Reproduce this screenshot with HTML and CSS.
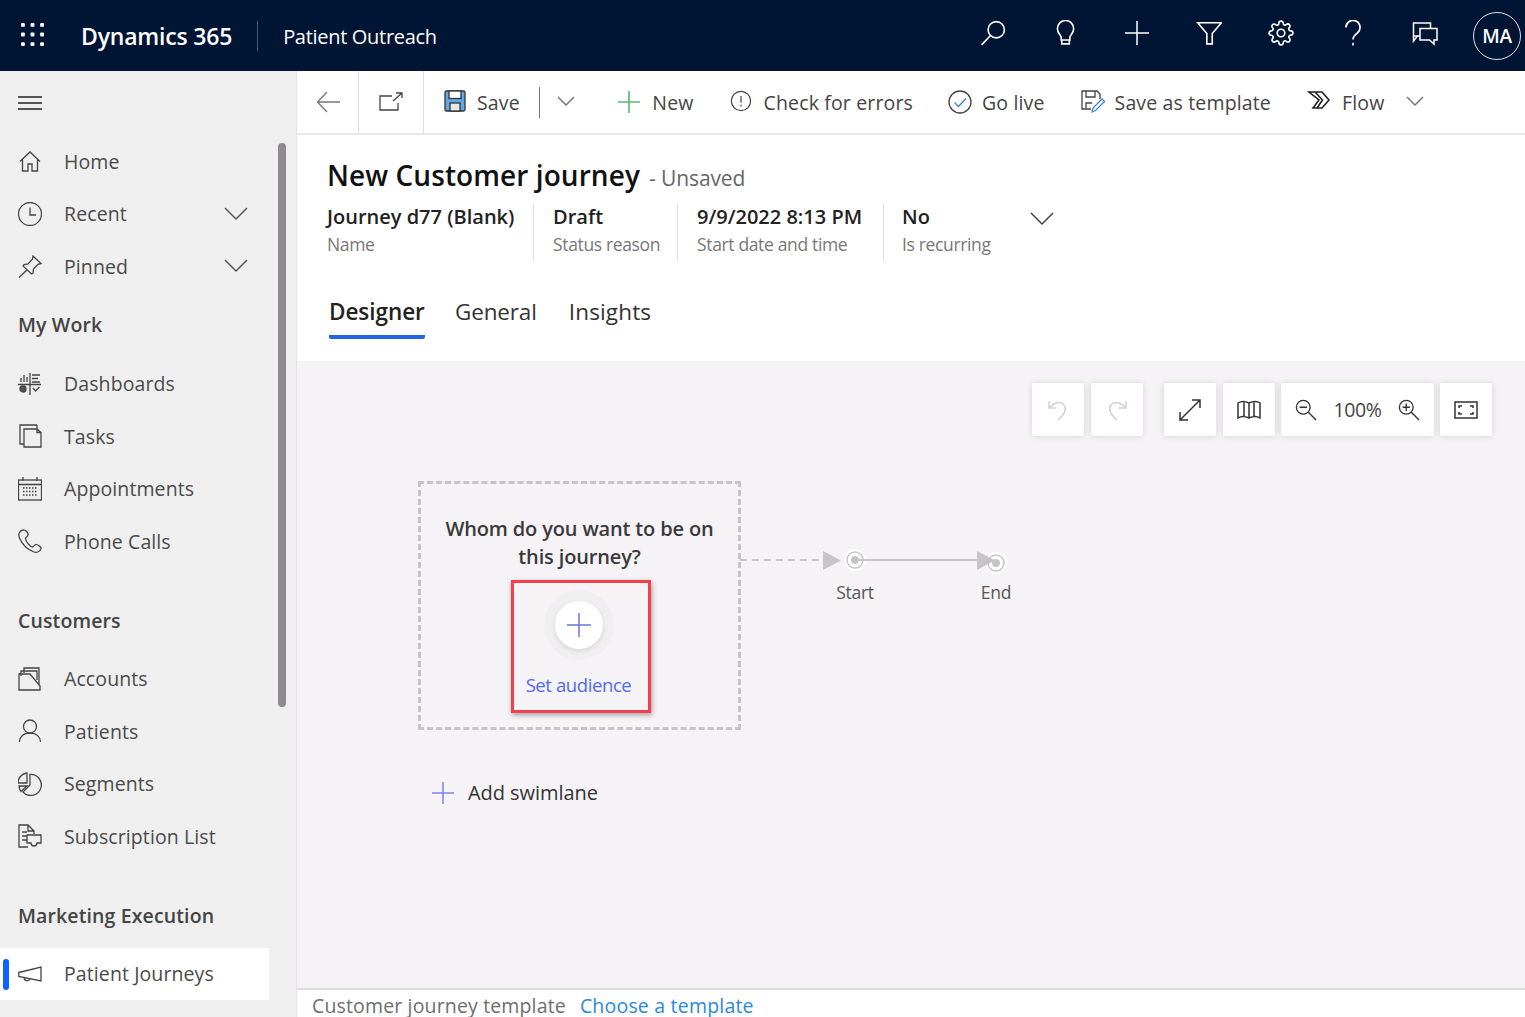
FILE: index.html
```html
<!DOCTYPE html>
<html lang="en">
<head>
<meta charset="utf-8">
<title>New Customer journey</title>
<link rel="stylesheet" href="styles.css">
</head>
<body>
<header class="topbar">
  <svg class="waffle" viewBox="0 0 24 24"><g fill="#fff"><rect x="0" y="0" width="4" height="4" rx="1"/><rect x="10" y="0" width="4" height="4" rx="1"/><rect x="20" y="0" width="4" height="4" rx="1"/><rect x="0" y="10" width="4" height="4" rx="1"/><rect x="10" y="10" width="4" height="4" rx="1"/><rect x="20" y="10" width="4" height="4" rx="1"/><rect x="0" y="20" width="4" height="4" rx="1"/><rect x="10" y="20" width="4" height="4" rx="1"/><rect x="20" y="20" width="4" height="4" rx="1"/></g></svg>
  <span class="brand">Dynamics 365</span>
  <span class="brand-div"></span>
  <span class="app">Patient Outreach</span>
  <div class="top-icons">
    <svg class="ti" viewBox="0 0 24 24"><circle cx="15" cy="9" r="7.500"/><path d="M9.500 14.500 1.500 23"/></svg>
    <svg class="ti" viewBox="0 0 24 24"><path d="M8.500 18.500v-2.500c0-2-3.500-3.500-3.500-8a7.500 7.500 0 0 1 15 0c0 4.500-3.500 6-3.500 8v2.500z"/><path d="M9 18.500v3.500h7v-3.500"/></svg>
    <svg class="ti ti-plus" viewBox="0 0 26 26"><path d="M13 1v24M1 13h24"/></svg>
    <svg class="ti" viewBox="0 0 24 24"><path d="M1.500 2.500h22l-8.500 10V22h-5v-9.500z"/></svg>
    <svg class="ti" viewBox="0 0 24 24"><path d="M19.400 15a1.650 1.650 0 0 0 .33 1.820l.06.06a2 2 0 0 1 0 2.830 2 2 0 0 1-2.830 0l-.06-.06a1.650 1.650 0 0 0-1.820-.33 1.650 1.650 0 0 0-1 1.510V21a2 2 0 0 1-2 2 2 2 0 0 1-2-2v-.09A1.650 1.650 0 0 0 9 19.400a1.650 1.650 0 0 0-1.820.33l-.06.06a2 2 0 0 1-2.830 0 2 2 0 0 1 0-2.830l.06-.06a1.650 1.650 0 0 0 .33-1.820 1.650 1.650 0 0 0-1.510-1H3a2 2 0 0 1-2-2 2 2 0 0 1 2-2h.09A1.650 1.650 0 0 0 4.600 9a1.650 1.650 0 0 0-.33-1.820l-.06-.06a2 2 0 0 1 0-2.830 2 2 0 0 1 2.830 0l.06.06a1.650 1.650 0 0 0 1.820.33H9a1.650 1.650 0 0 0 1-1.510V3a2 2 0 0 1 2-2 2 2 0 0 1 2 2v.09a1.650 1.650 0 0 0 1 1.510 1.650 1.650 0 0 0 1.820-.33l.06-.06a2 2 0 0 1 2.830 0 2 2 0 0 1 0 2.830l-.06.06a1.650 1.650 0 0 0-.33 1.820V9a1.650 1.650 0 0 0 1.510 1H21a2 2 0 0 1 2 2 2 2 0 0 1-2 2h-.09a1.650 1.650 0 0 0-1.510 1z"/><circle cx="12" cy="12" r="3.500"/></svg>
    <svg class="ti" viewBox="0 0 24 24"><path d="M5.500 7a6.500 6.500 0 1 1 10.500 5c-2.500 2-4 3-4 6"/><path d="M12 21v2.500"/></svg>
    <svg class="ti" viewBox="0 0 26 24"><path d="M8 15H1.500V2h17v5"/><path d="M1.500 15v5l4-5"/><path d="M8 7.500h17V19h-3v4l-4.500-4H8z"/></svg>
    <span class="avatar">MA</span>
  </div>
</header>

<div class="shell">
  <aside class="sidebar">
    <nav class="nav">
      <div class="burger"><svg class="nav-ico" viewBox="0 0 24 24"><path d="M0 6h24M0 12h24M0 18h24"/></svg></div>
      <a class="row"><svg class="nav-ico" viewBox="0 0 24 24"><path d="M2 12.500 12 3l10 9.500M4.500 10.500V22h5.500v-7h4v7h5.500V10.500"/></svg><span>Home</span></a>
      <a class="row"><svg class="nav-ico" viewBox="0 0 24 24"><circle cx="12" cy="12" r="11.500"/><path d="M12 5.500V13h6"/></svg><span>Recent</span><svg class="chev" viewBox="0 0 24 14"><path d="M1 1l11 11L23 1"/></svg></a>
      <a class="row"><svg class="nav-ico" viewBox="0 0 24 24"><path d="M15 2l8 7.500-3 .8-4.500 4.700-.5 4-1.500 1L5 12l1-1.500 4-.5 4.500-4.700zM9.500 15.500 1 23.500"/></svg><span>Pinned</span><svg class="chev" viewBox="0 0 24 14"><path d="M1 1l11 11L23 1"/></svg></a>

      <h2 class="sec sec-a">My Work</h2>
      <a class="row"><svg class="nav-ico" viewBox="0 0 24 24"><path d="M0 12.500h23M12 1v22M3 10V6M6 10V3M9 10V5M14 3h8M14 6.500h6M14 10h8M15 16l2.500 3 4-4"/><circle cx="5" cy="17" r="3" fill="#555"/></svg><span>Dashboards</span></a>
      <a class="row"><svg class="nav-ico" viewBox="0 0 24 24"><path d="M19 1H2v19h4M6 5v18h17V8.500L19 5H6zM19 1v7.500h4"/></svg><span>Tasks</span></a>
      <a class="row"><svg class="nav-ico" viewBox="0 0 24 24"><rect x="0.500" y="3" width="23" height="20"/><path d="M0 7.500h24M5 0v4M19 0v4"/><path class="dots" d="M5 11h15M5 14.500h15M5 18h15"/></svg><span>Appointments</span></a>
      <a class="row"><svg class="nav-ico" viewBox="0 0 24 24"><path d="M5 1C1 2 0 5 1.500 9 4 15 9 20.500 16 23c3 1 6-.5 7-3.500.3-1-2-3-4.500-4-1.500-.5-3 2.500-4 2.500-2.500 0-7-6-7-8.500 0-1.200 3-2 2.500-4C10.500 3.500 7 .5 5 1z"/></svg><span>Phone Calls</span></a>

      <h2 class="sec sec-b">Customers</h2>
      <a class="row"><svg class="nav-ico" viewBox="0 0 24 24"><path d="M6 6V1h15v16M3 9V4h16v9M1 7h11l10 12v4H1z"/></svg><span>Accounts</span></a>
      <a class="row"><svg class="nav-ico" viewBox="0 0 24 24"><circle cx="12" cy="7.500" r="6.500"/><path d="M1.500 23c0-5 4-9 10.500-9s10.500 4 10.500 9"/></svg><span>Patients</span></a>
      <a class="row"><svg class="nav-ico" viewBox="0 0 24 24"><path d="M12 2.500A10.500 10.500 0 1 1 5 20l7-7z"/><path d="M9 1v10H0A10 10 0 0 1 9 1zM1 14h8l-6 5.500A10 10 0 0 1 1 14z"/></svg><span>Segments</span></a>
      <a class="row"><svg class="nav-ico" viewBox="0 0 24 24"><path d="M10 23H1V1h9l6 6v3M10 1v6h6M4 8h5M4 12h5M4 16h5"/><path d="M9 11h14v8H19a3 3 0 0 1-6 0H9z"/></svg><span>Subscription List</span></a>

      <h2 class="sec sec-b">Marketing Execution</h2>
      <a class="row row-active"><i class="mark"></i><svg class="nav-ico" viewBox="0 0 24 24"><path d="M0.800 10.500 23 5v14L0.800 14.500zM6 15.500c0 4 5.500 4 6 1"/></svg><span>Patient Journeys</span></a>
    </nav>
    <div class="track"><div class="thumb"></div></div>
  </aside>

  <main class="content">
    <div class="toolbar">
      <div class="cell"><svg class="tbi" viewBox="0 0 24 24"><path class="soft" d="M24 12H2M11 2 1.500 12 11 22"/></svg></div>
      <div class="cell cell-b"><svg class="tbi" viewBox="0 0 24 24"><path d="M13 6H1v14h18v-7"/><path d="M14 11 23 3M17 3h6v5"/></svg></div>
      <div class="cmds">
        <svg class="tbi save-ico" viewBox="0 0 22 22"><rect x="1" y="1" width="20" height="20" rx="1.500" fill="#62a8e5" stroke="#333"/><rect x="5" y="1" width="12" height="7.500" fill="#fff" stroke="#333"/><rect x="6" y="13" width="10" height="8" fill="#e8e8e8" stroke="#333"/></svg>
        <span class="cmd t-save">Save</span>
        <i class="vsep"></i>
        <svg class="small-chev c-save" viewBox="0 0 18 10"><path d="M1 1l8 8 8-8"/></svg>
        <svg class="tbi plus-ico" viewBox="0 0 24 24"><path d="M12 0v24M0 12h24"/></svg>
        <span class="cmd t-new">New</span>
        <svg class="tbi ico-check" viewBox="0 0 24 24"><circle cx="12" cy="12" r="10.500"/><path d="M12 6.500V14M12 16v2"/></svg>
        <span class="cmd t-check">Check for errors</span>
        <svg class="tbi ico-live" viewBox="0 0 24 24"><circle cx="12" cy="12" r="11"/><path class="blue" d="M6.500 12.500l4 4 7.500-8"/></svg>
        <span class="cmd t-live">Go live</span>
        <svg class="tbi ico-tmpl" viewBox="0 0 24 24"><path d="M10 19H1V1h15l3 3v5"/><path d="M5 1v6h9V1M5 18v-5h6"/><path class="blue" d="M11 22l1-4 9-9 2.500 2.500-9 9z"/></svg>
        <span class="cmd t-tmpl">Save as template</span>
        <svg class="tbi ico-flow" viewBox="0 0 24 24"><path d="M2 3h13l7 8-7 8H6l6-8zM8 3l7.500 8L10 19"/></svg>
        <span class="cmd t-flow">Flow</span>
        <svg class="small-chev c-flow" viewBox="0 0 18 10"><path d="M1 1l8 8 8-8"/></svg>
      </div>
    </div>

    <section class="record">
      <div class="title-line"><h1>New Customer journey</h1><span class="unsaved">- Unsaved</span></div>
      <div class="fields">
        <div class="field f1"><b>Journey d77 (Blank)</b><small>Name</small></div>
        <div class="field f2"><b>Draft</b><small>Status reason</small></div>
        <div class="field f3"><b>9/9/2022 8:13 PM</b><small>Start date and time</small></div>
        <div class="field f4"><b>No</b><small>Is recurring</small></div>
        <svg class="fields-chev" viewBox="0 0 24 14"><path d="M1 1l11 11L23 1"/></svg>
      </div>
      <div class="tabs">
        <span class="tab tab-on">Designer</span>
        <span class="tab tab-g">General</span>
        <span class="tab tab-i">Insights</span>
      </div>
    </section>

    <section class="canvas">
      <div class="canvas-tools">
        <span class="tool tool-off"><svg viewBox="0 0 24 24"><path d="M3 3v7h7M3.500 9.500C8 4 15 3 18 7c3 4 1 9-6 15"/></svg></span>
        <span class="tool tool-off"><svg viewBox="0 0 24 24"><path d="M21 3v7h-7M20.500 9.500C16 4 9 3 6 7c-3 4-1 9 6 15"/></svg></span>
        <span class="tool tool-gap"><svg viewBox="0 0 24 24"><path d="M2 22 22 2M14 2h8v8M2 14v8h8"/></svg></span>
        <span class="tool"><svg viewBox="0 0 24 24"><path d="M1 5c3-2 7-2 11 0 4-2 8-2 11 0v15c-3-2-7-2-11 0-4-2-8-2-11 0zM12 5v15M7 4v15M17 4v15"/></svg></span>
        <span class="tool tool-zoom">
          <svg viewBox="0 0 24 24"><circle cx="9" cy="9" r="7.500"/><path d="M14.500 14.500 23 23M5 9h8"/></svg>
          <span class="pct">100%</span>
          <svg viewBox="0 0 24 24"><circle cx="9" cy="9" r="7.500"/><path d="M14.500 14.500 23 23M5 9h8M9 5v8"/></svg>
        </span>
        <span class="tool tool-fit"><svg viewBox="0 0 24 24"><rect x="1" y="4" width="22" height="16"/><path d="M5 10V8h3M19 10V8h-3M5 14v2h3M19 14v2h-3"/></svg></span>
      </div>

      <div class="lane">
        <p class="lane-q">Whom do you want to be on<br>this journey?</p>
        <div class="aud">
          <span class="halo"><span class="disc"><svg viewBox="0 0 24 24"><path d="M12 0v24M0 12h24"/></svg></span></span>
          <span class="aud-label">Set audience</span>
        </div>
      </div>

      <svg class="links" viewBox="0 0 300 40">
        <path class="dash" d="M0 19h82"/>
        <path class="tri" d="M83 10l18 9.500L83 29z"/>
        <circle class="halo-c" cx="115" cy="19" r="11"/>
        <circle class="ring" cx="115" cy="19" r="8"/>
        <circle class="dot" cx="115" cy="19" r="4"/>
        <path class="solid" d="M115 19h124"/>
        <circle class="halo-c" cx="256" cy="22" r="11"/>
        <circle class="ring" cx="256" cy="22" r="8"/>
        <circle class="dot" cx="256" cy="22" r="4"/>
        <path class="tri" d="M237 10l18 9.500L237 29z"/>
      </svg>
      <span class="node-label l-start">Start</span>
      <span class="node-label l-end">End</span>

      <div class="add-lane"><svg viewBox="0 0 24 24"><path d="M12 1v22M1 12h22"/></svg><span>Add swimlane</span></div>
    </section>

    <footer class="foot"><span class="foot-l">Customer journey template</span><a class="foot-a">Choose a template</a></footer>
  </main>
</div>
</body>
</html>
```

FILE: styles.css
```css
* { box-sizing: border-box; }
html, body { margin: 0; height: 100%; overflow: hidden; }
body {
  width: 1525px; height: 1017px;
  font-family: "Open Sans", "Noto Sans", sans-serif;
  color: #333;
  display: flex; flex-direction: column;
  background: #fff;
}
svg { fill: none; stroke: currentColor; stroke-width: 1.500; flex: none; display: block; }

/* top bar */
.topbar {
  height: 71px; flex: none; background: #001433; color: #fff;
  display: flex; align-items: center; padding-left: 21px;
}
.waffle { width: 23px; height: 23px; stroke: none; margin-top: -2px; }
.brand { margin-left: 37px; font-size: 23px; font-weight: 600; letter-spacing: -.2px; }
.brand-div { width: 1px; height: 30px; background: #4b5a73; margin-left: 25px; }
.app { margin-left: 25px; font-size: 20px; letter-spacing: -.3px; margin-top: 2px; }
.top-icons { margin-left: auto; display: flex; align-items: center; height: 100%; }
.ti { width: 26px; height: 26px; margin-right: 46px; margin-top: -5px; }
.avatar {
  width: 48px; height: 48px; border: 1.500px solid #dfe3ea; border-radius: 50%;
  display: flex; align-items: center; justify-content: center;
  font-size: 19px; font-weight: 600; margin-right: 4px; margin-left: -11px; letter-spacing: -.4px;
}

.shell { flex: 1; display: flex; min-height: 0; }

/* sidebar */
.sidebar { width: 296px; flex: none; background: #efefef; display: flex; }
.nav { width: 269px; flex: none; color: #4a4a4a; }
.burger { height: 64px; padding: 20px 0 0 18px; }
.nav-ico { width: 24px; height: 24px; margin-left: 18px; stroke-width: 1.300; color: #444; }
.burger .nav-ico { margin-left: 0; color: #222; }
.row {
  height: 52.500px; display: flex; align-items: center; position: relative;
  font-size: 19.500px; letter-spacing: .1px;
}
.row > span { margin-left: 22px; flex: 1; }
.chev { width: 24px; height: 14px; margin-right: 21px; color: #555; stroke-width: 1.500; }
.sec { margin: 0 0 6px; height: 52px; padding-left: 18px; display: flex; align-items: center; font-size: 19.500px; font-weight: 600; letter-spacing: .12px; color: #444; }
.sec-a { margin: 6px 0 7px; }
.sec-b { margin-top: 27px; }
.row-active { background: #fff; }
.mark { position: absolute; left: 3px; top: 11px; width: 6px; height: 31px; border-radius: 3px; background: #0f62fe; }
.dots { stroke-dasharray: 1.500 1.500; }
.track { width: 27px; flex: none; padding: 72px 10px 0 9px; }
.thumb { width: 8px; height: 564px; background: #8d8b8d; border-radius: 4px; }

/* main */
.content { flex: 1; min-width: 0; display: flex; flex-direction: column; border-left: 1px solid #e6e2e6; }
.toolbar { height: 64px; flex: none; display: flex; align-items: center; border-bottom: 2px solid #e9e9e9; }
.cell { width: 62px; height: 100%; display: flex; align-items: center; justify-content: center; border-right: 1px solid #dcdcdc; }
.cell-b { width: 65px; }
.tbi { width: 24px; height: 24px; color: #444; stroke-width: 1.300; }
.soft { color: #777; stroke: #777; }
.cmds { display: flex; align-items: center; padding-left: 20px; flex: 1; }
.cmd { font-size: 19.500px; letter-spacing: .15px; color: #444; }
.save-ico { width: 22px; height: 22px; margin-top: -3px; }
.t-save { margin-left: 11px; }
.vsep { width: 1.500px; height: 31px; background: #777; margin-left: 19px; }
.small-chev { width: 18px; height: 10px; color: #777; }
.c-save { margin-left: 17px; margin-top: -3px; }
.plus-ico { width: 22px; height: 22px; color: #57b97a; margin-left: 43px; stroke-width: 1.800; }
.t-new { margin-left: 12px; }
.ico-check { width: 22px; height: 22px; margin-left: 36px; margin-top: -3px; }
.t-check { margin-left: 12px; }
.ico-live { margin-left: 35px; }
.blue { stroke: #3a86d8; }
.t-live { margin-left: 10px; }
.ico-tmpl { margin-left: 36px; }
.t-tmpl { margin-left: 10px; }
.ico-flow { margin-left: 36px; margin-top: -2px; color: #222; stroke-width: 1.600; }
.t-flow { margin-left: 11px; }
.c-flow { margin-left: 22px; margin-top: -3px; }

/* record header */
.record { height: 226px; flex: none; padding: 19px 0 0 30px; background: #fff; }
.title-line { display: flex; align-items: baseline; height: 42px; }
h1 { margin: 0; font-size: 28px; font-weight: 600; letter-spacing: .08px; color: #111; line-height: 42px; }
.unsaved { margin-left: 9px; font-size: 21px; color: #666; letter-spacing: -.1px; white-space: nowrap; }
.fields { display: flex; align-items: flex-start; height: 57px; margin-top: 8px; position: relative; }
.field { height: 57px; display: flex; flex-direction: column; border-right: 1px solid #ddd; }
.field b { font-size: 20px; font-weight: 600; line-height: 26px; color: #222; white-space: nowrap; }
.field small { font-size: 17.500px; color: #777; line-height: 28px; letter-spacing: -.35px; white-space: nowrap; }
.f1 { width: 207px; }
.f2 { width: 144px; padding-left: 19px; }
.f3 { width: 206px; padding-left: 19px; }
.f4 { width: 146px; padding-left: 18px; border-right: 0; }
.fields-chev { width: 24px; height: 14px; margin-top: 8px; color: #444; }
.tabs { display: flex; height: 60px; margin-top: 32px; }
.tab { font-size: 22.500px; color: #333; height: 46px; padding-top: 3px; line-height: 32px; white-space: nowrap; }
.tab-on { margin-left: 2px; width: 96px; font-weight: 600; border-bottom: 4px solid #2266e3; border-radius: 0 0 2px 2px; color: #222; letter-spacing: -.05px; }
.tab-g { margin-left: 30px; letter-spacing: -.15px; }
.tab-i { margin-left: 32px; letter-spacing: .15px; }

/* canvas */
.canvas { flex: 1; min-height: 0; background: #f6f3f7; position: relative; }
.canvas-tools { position: absolute; left: 735px; top: 22px; display: flex; gap: 7px; }
.tool {
  width: 52px; height: 53px; background: #fff; border-radius: 2px;
  box-shadow: 0 0 6px rgba(0,0,0,.14);
  display: flex; align-items: center; justify-content: center; color: #333;
}
.tool svg { width: 24px; height: 24px; }
.tool-off { color: #d5ced6; }
.tool-gap { margin-left: 14px; }
.tool-zoom { width: 153px; justify-content: space-between; padding: 0 14px; margin-left: -1px; }
.tool-zoom svg { width: 22px; height: 22px; }
.tool-fit { margin-left: -1px; }
.pct { font-size: 19.500px; letter-spacing: -.4px; color: #444; }

.lane {
  position: absolute; left: 121px; top: 120px; width: 323px; height: 249px;
  border: 3px dashed #c6c4c6;
  display: flex; flex-direction: column; align-items: center;
}
.lane-q { margin: 31px 0 0; text-align: center; font-size: 20px; line-height: 28px; font-weight: 600; color: #3a3a3a; letter-spacing: -.15px; white-space: nowrap; }
.aud {
  width: 140px; height: 133px; margin: 9px 0 0 3px; padding-right: 5px;
  border: 3px solid #f4404e; box-shadow: 1px 2px 5px rgba(0,0,0,.35);
  display: flex; flex-direction: column; align-items: center;
}
.halo { width: 70px; height: 70px; margin-top: 7px; border-radius: 50%; background: #efefef; display: flex; align-items: center; justify-content: center; }
.disc { width: 48px; height: 48px; border-radius: 50%; background: #fff; box-shadow: 0 2px 5px rgba(0,0,0,.1); display: flex; align-items: center; justify-content: center; color: #6a74e0; }
.disc svg { width: 24px; height: 24px; }
.aud-label { margin-top: 12px; font-size: 18.500px; color: #4f6bed; letter-spacing: -.4px; white-space: nowrap; }

.links { position: absolute; left: 443px; top: 180px; width: 300px; height: 40px; overflow: visible; }
.dash { stroke: #c6c4c6; stroke-width: 2; stroke-dasharray: 7 5; }
.solid { stroke: #c6c4c6; stroke-width: 2; }
.tri { fill: #c6c4c6; stroke: none; }
.halo-c { fill: #fff; stroke: none; }
.ring { stroke: #c6c4c6; stroke-width: 1.500; }
.dot { fill: #c6c4c6; stroke: none; }
.node-label { position: absolute; top: 219px; font-size: 17.500px; color: #555; transform: translateX(-50%); letter-spacing: -.3px; }
.l-start { left: 558px; }
.l-end { left: 699px; }

.add-lane { position: absolute; left: 134px; top: 418px; display: flex; align-items: center; gap: 13px; font-size: 20px; color: #333; letter-spacing: -.05px; }
.add-lane svg { width: 24px; height: 24px; color: #7c84e8; }

/* footer */
.foot { height: 29px; flex: none; border-top: 2px solid #dcdcdc; padding: 5px 0 0 15px; display: flex; align-items: flex-start; font-size: 19.500px; line-height: 22px; letter-spacing: .15px; background: #fff; }
.foot-l { color: #6e6e6e; }
.foot-a { margin-left: 14px; color: #2b88d8; letter-spacing: .2px; }
```
